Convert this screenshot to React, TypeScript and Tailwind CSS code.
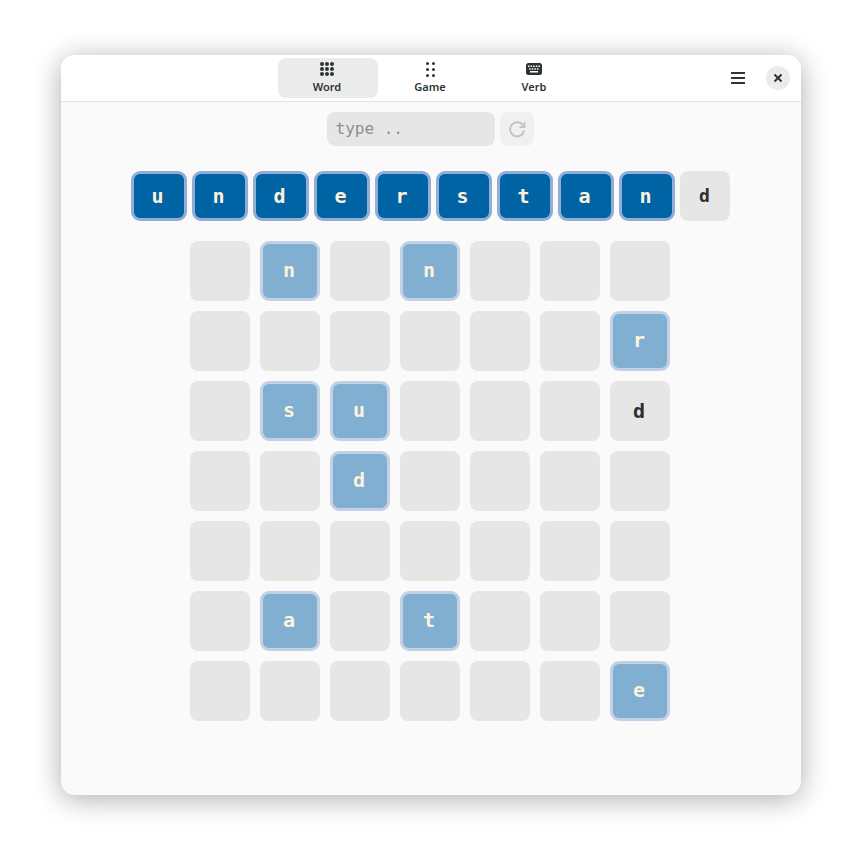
import React from "react";

const word = ["u", "n", "d", "e", "r", "s", "t", "a", "n"];

const board = [
  ["", "n", "", "n", "", "", ""],
  ["", "", "", "", "", "", "r"],
  ["", "s", "u", "", "", "", "!d"],
  ["", "", "d", "", "", "", ""],
  ["", "", "", "", "", "", ""],
  ["", "a", "", "t", "", "", ""],
  ["", "", "", "", "", "", "e"],
];

function WordIcon() {
  const dots = [];
  for (let y = 0; y < 3; y++) {
    for (let x = 0; x < 3; x++) {
      dots.push(<circle key={x + "-" + y} cx={2 + x * 5} cy={2 + y * 5} r="2" fill="#2e3436" />);
    }
  }
  return (
    <svg width="14" height="14" viewBox="0 0 14 14">
      {dots}
    </svg>
  );
}

function GameIcon() {
  const dots = [];
  for (let y = 0; y < 3; y++) {
    for (let x = 0; x < 2; x++) {
      dots.push(<circle key={x + "-" + y} cx={1.5 + x * 6} cy={1.5 + y * 6} r="1.5" fill="#2e3436" />);
    }
  }
  return (
    <svg width="9" height="15" viewBox="0 0 9 15">
      {dots}
    </svg>
  );
}

function KeyboardIcon() {
  return (
    <svg width="16" height="12" viewBox="0 0 16 12">
      <rect x="0" y="0" width="16" height="12" rx="2.5" fill="#2e3436" />
      <g fill="#ffffff">
        <rect x="2" y="2.5" width="1.5" height="1.5" />
        <rect x="4.6" y="2.5" width="1.5" height="1.5" />
        <rect x="7.2" y="2.5" width="1.5" height="1.5" />
        <rect x="9.8" y="2.5" width="1.5" height="1.5" />
        <rect x="12.4" y="2.5" width="1.5" height="1.5" />
        <rect x="3.2" y="5.2" width="1.5" height="1.5" />
        <rect x="5.8" y="5.2" width="1.5" height="1.5" />
        <rect x="8.4" y="5.2" width="1.5" height="1.5" />
        <rect x="11" y="5.2" width="1.5" height="1.5" />
        <rect x="4" y="8" width="8" height="1.5" />
      </g>
    </svg>
  );
}

function Tab({ label, active, icon, nudge }: { label: string; active?: boolean; icon: React.ReactNode; nudge?: boolean }) {
  return (
    <div className={"w-[100px] h-10 rounded-lg flex flex-col items-center " + (active ? "bg-[#ebebeb] " : "") + (nudge ? "pr-[2px]" : "")}>
      <div className="h-6 flex items-center justify-center -mt-[1px]">{icon}</div>
      <span className="text-[11px] leading-[13px] font-semibold text-[#2e3436] font-['Noto_Sans',sans-serif] -mt-[1px]">{label}</span>
    </div>
  );
}

function Cell({ value }: { value: string }) {
  if (value === "") return <div className="w-[60px] h-[60px] rounded-lg bg-[#e6e6e6]" />;
  if (value.startsWith("!")) {
    return (
      <div className="w-[60px] h-[60px] rounded-lg bg-[#e6e6e6] flex items-center justify-center pr-[2px] pb-[1px] text-[#2e2e2e] text-[20px] font-bold">
        {value.slice(1)}
      </div>
    );
  }
  return (
    <div className="w-[60px] h-[60px] rounded-[9px] bg-[#80afd1] border-[3px] border-[#c3d0e6] flex items-center justify-center pr-[2px] pb-[2px] text-[#fdf3dc] text-[20px] font-bold">
      {value}
    </div>
  );
}

export default function App() {
  return (
    <div className="w-[862px] h-[862px] bg-white flex justify-center pt-[55px] pr-[1px]">
      <div className="w-[740px] h-[740px] rounded-[14px] bg-[#fafafa] overflow-hidden shadow-[0_4px_28px_rgba(0,0,0,0.33)] flex flex-col">
        <div className="h-[47px] bg-white border-b border-[#e3e3e3] relative flex justify-center gap-[3px] pt-[3px] pl-[1px] shrink-0">
          <Tab label="Word" active nudge icon={<WordIcon />} />
          <Tab label="Game" nudge icon={<GameIcon />} />
          <Tab label="Verb" icon={<KeyboardIcon />} />
          <div className="absolute right-[11px] top-[11px] flex items-center gap-[21px]">
            <svg width="14" height="12" viewBox="0 0 14 12">
              <rect x="0" y="0" width="14" height="2" fill="#2e3436" />
              <rect x="0" y="5" width="14" height="2" fill="#2e3436" />
              <rect x="0" y="10" width="14" height="2" fill="#2e3436" />
            </svg>
            <div className="w-6 h-6 rounded-full bg-[#ebebeb] flex items-center justify-center">
              <svg width="10" height="10" viewBox="0 0 10 10">
                <path d="M1.5 1.5L8.5 8.5M8.5 1.5L1.5 8.5" stroke="#2e3436" strokeWidth="2" />
              </svg>
            </div>
          </div>
        </div>
        <div className="flex flex-col items-center font-['DejaVu_Sans_Mono',monospace]">
          <div className="mt-[10px] flex gap-[5px] pr-[1px]">
            <div className="w-[168px] h-[34px] rounded-lg bg-[#e6e6e6] px-[9px] flex items-center text-[16px] text-[#8e8e8e]">type ..</div>
            <div className="w-[34px] h-[34px] rounded-lg bg-[#f0f0f0] flex items-center justify-center pt-[1px]">
              <svg width="18" height="17" viewBox="0 0 18 17" fill="none" stroke="#c4c4c4" strokeWidth="2">
                <path d="M15 4.5A7 7 0 1 0 16 9.5" />
                <path d="M16.5 1V6H11.5" />
              </svg>
            </div>
          </div>
          <div className="mt-[25px] flex gap-[5px] pr-[1px]">
            {word.map((c, i) => (
              <div
                key={i}
                className="w-[56px] h-[50px] rounded-[9px] bg-[#0063a4] border-[3px] border-[#93aed6] flex items-center justify-center pr-[2px] text-[#fdf3dc] text-[20px] font-bold"
              >
                {c}
              </div>
            ))}
            <div className="w-[50px] h-[50px] rounded-lg bg-[#e6e6e6] flex items-center justify-center pb-[1px] text-[#2e2e2e] text-[18px] font-bold">d</div>
          </div>
          <div className="mt-5 flex flex-col gap-[10px] pr-[1px]">
            {board.map((row, y) => (
              <div key={y} className="flex gap-[10px]">
                {row.map((v, x) => (
                  <Cell key={x} value={v} />
                ))}
              </div>
            ))}
          </div>
        </div>
      </div>
    </div>
  );
}
